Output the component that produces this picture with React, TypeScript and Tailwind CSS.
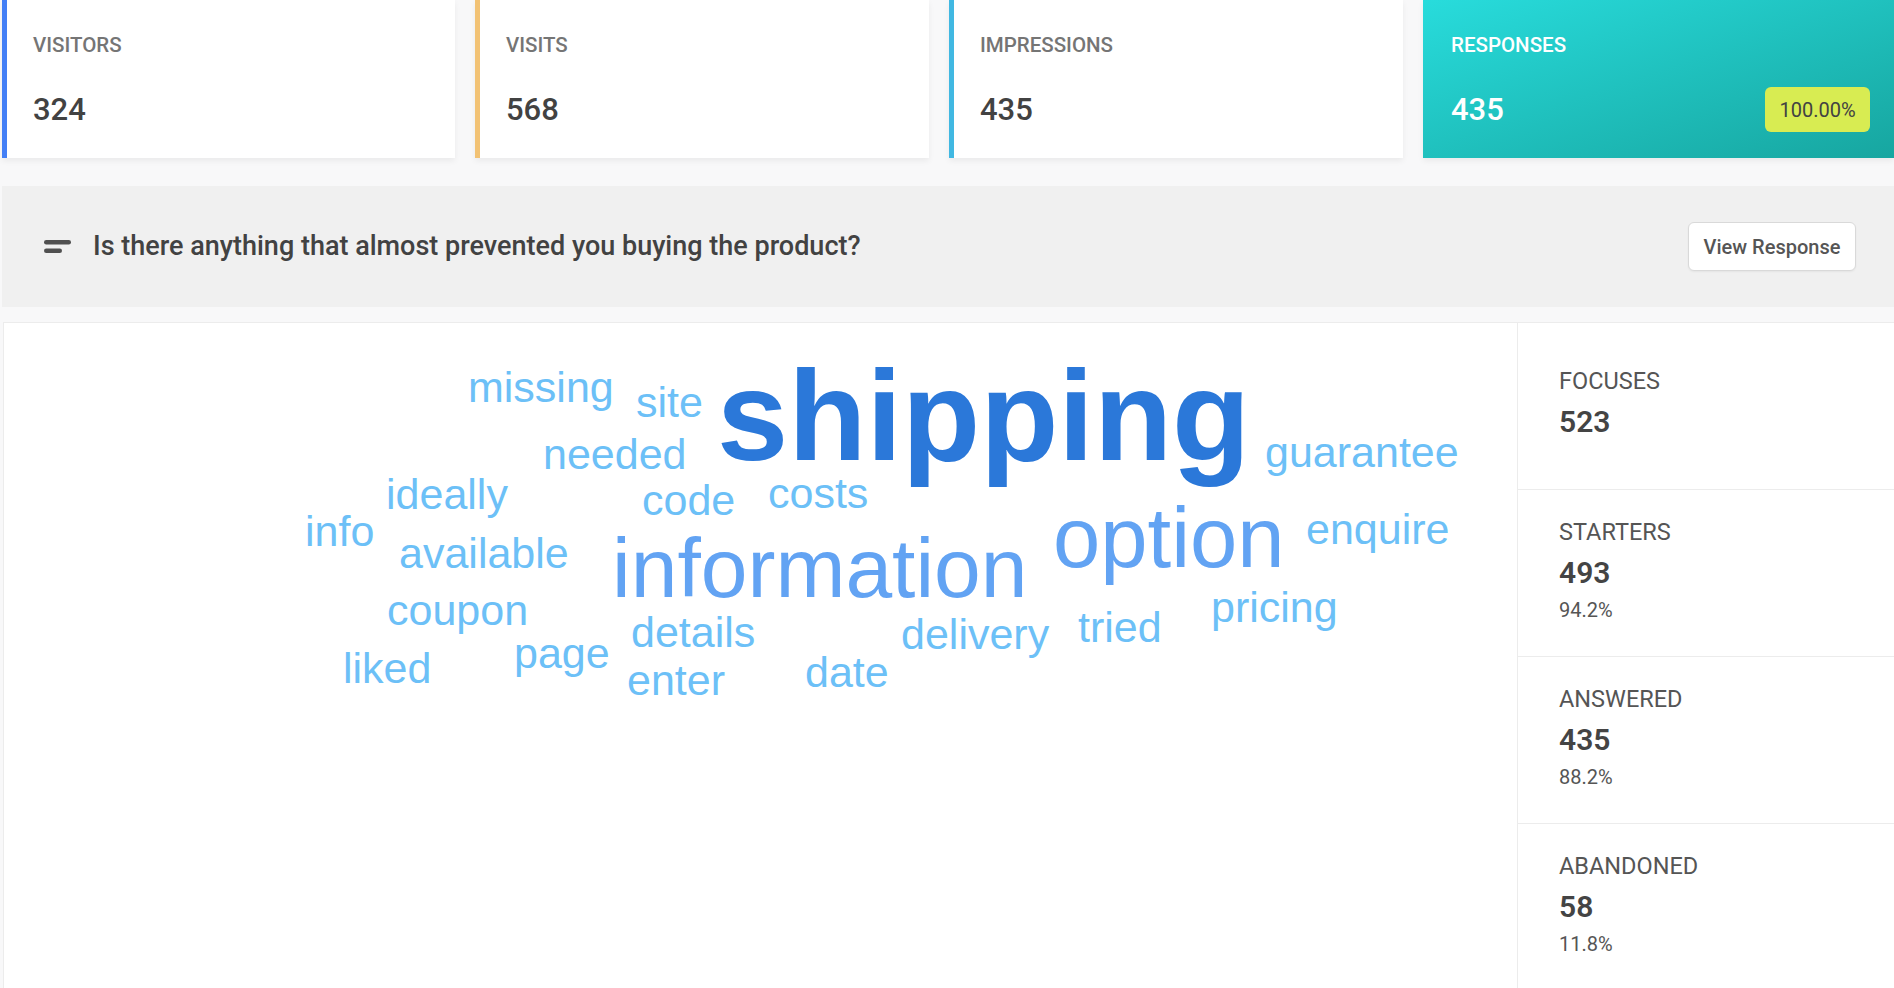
import React from "react";

type Word = { text: string; cls: string };

const words: Word[] = [
  { text: "missing", cls: "left-[464px] top-[43px] text-[43px] text-[#6cc0f7]" },
  { text: "site", cls: "left-[632px] top-[58px] text-[43px] text-[#6cc0f7]" },
  { text: "shipping", cls: "left-[713px] top-[29px] text-[128px] font-bold text-[#2b78d9]" },
  { text: "guarantee", cls: "left-[1261px] top-[108px] text-[43px] text-[#6cc0f7]" },
  { text: "needed", cls: "left-[539px] top-[110px] text-[43px] text-[#6cc0f7]" },
  { text: "ideally", cls: "left-[382px] top-[150px] text-[43px] text-[#6cc0f7]" },
  { text: "code", cls: "left-[638px] top-[156px] text-[43px] text-[#6cc0f7]" },
  { text: "costs", cls: "left-[764px] top-[149px] text-[43px] text-[#6cc0f7]" },
  { text: "info", cls: "left-[301px] top-[187px] text-[43px] text-[#6cc0f7]" },
  { text: "available", cls: "left-[395px] top-[209px] text-[43px] text-[#6cc0f7]" },
  { text: "information", cls: "left-[608px] top-[203px] text-[84px] text-[#62a3f3]" },
  { text: "option", cls: "left-[1049px] top-[172px] text-[85px] text-[#62a3f3]" },
  { text: "enquire", cls: "left-[1302px] top-[185px] text-[43px] text-[#6cc0f7]" },
  { text: "coupon", cls: "left-[383px] top-[266px] text-[43px] text-[#6cc0f7]" },
  { text: "pricing", cls: "left-[1207px] top-[263px] text-[43px] text-[#6cc0f7]" },
  { text: "tried", cls: "left-[1074px] top-[283px] text-[43px] text-[#6cc0f7]" },
  { text: "details", cls: "left-[627px] top-[288px] text-[43px] text-[#6cc0f7]" },
  { text: "delivery", cls: "left-[897px] top-[290px] text-[43px] text-[#6cc0f7]" },
  { text: "liked", cls: "left-[339px] top-[324px] text-[43px] text-[#6cc0f7]" },
  { text: "page", cls: "left-[510px] top-[309px] text-[43px] text-[#6cc0f7]" },
  { text: "enter", cls: "left-[623px] top-[336px] text-[43px] text-[#6cc0f7]" },
  { text: "date", cls: "left-[801px] top-[328px] text-[43px] text-[#6cc0f7]" },
];

function StatCard({ label, value, border }: { label: string; value: string; border: string }) {
  return (
    <div
      className={`h-full flex flex-col bg-white border-l-[5px] ${border} pl-[26px] pt-[33px] shadow-[0_3px_6px_rgba(0,0,0,0.06)]`}
    >
      <div className="text-[20.5px] leading-[25px] font-medium text-[#757575]">{label}</div>
      <div className="mt-[33px] text-[31px] leading-[38px] font-medium text-[#424242]">{value}</div>
    </div>
  );
}

const stats = [
  { label: "FOCUSES", value: "523", pct: "" },
  { label: "STARTERS", value: "493", pct: "94.2%" },
  { label: "ANSWERED", value: "435", pct: "88.2%" },
  { label: "ABANDONED", value: "58", pct: "11.8%" },
];

export default function App() {
  return (
    <div className="w-[1894px] h-[988px] overflow-hidden bg-[#f8f8f9] pl-[2px] font-[Roboto,'Noto_Sans',sans-serif]">
      {/* top cards */}
      <div className="flex gap-[20px] h-[158px]">
        <div className="w-[453px] h-full">
          <StatCard label="VISITORS" value="324" border="border-[#437ff6]" />
        </div>
        <div className="w-[454px] h-full">
          <StatCard label="VISITS" value="568" border="border-[#f2c274]" />
        </div>
        <div className="w-[454px] h-full">
          <StatCard label="IMPRESSIONS" value="435" border="border-[#41b8e2]" />
        </div>
        <div className="flex-1 h-full flex flex-col pl-[28px] pr-[24px] pt-[33px] bg-linear-to-br from-[#28dcdc] to-[#17a6a0] shadow-[0_3px_6px_rgba(0,0,0,0.06)]">
          <div className="text-[20.5px] leading-[25px] font-medium text-white">RESPONSES</div>
          <div className="mt-[29px] flex items-center justify-between">
            <div className="text-[31px] leading-[38px] font-medium text-white">435</div>
            <div className="h-[45px] w-[105px] rounded-[6px] bg-[#d8ec52] flex items-center justify-center text-[20px] text-[#424242]">
              100.00%
            </div>
          </div>
        </div>
      </div>

      {/* question bar */}
      <div className="mt-[28px] h-[121px] bg-[#f0f0f0] flex items-center pl-[41px] pr-[38px]">
        <svg width="29" height="16" viewBox="0 0 29 16" className="shrink-0">
          <rect x="1" y="1" width="27" height="4.5" rx="2.25" fill="#505050" />
          <rect x="1" y="9.5" width="18" height="4.5" rx="2.25" fill="#505050" />
        </svg>
        <div className="ml-[21px] text-[27px] font-medium text-[#424242]">
          Is there anything that almost prevented you buying the product?
        </div>
        <button className="ml-auto h-[49px] w-[168px] rounded-[6px] border border-[#d9d9d9] bg-white text-[20px] font-medium text-[#555555] shadow-[0_1px_2px_rgba(0,0,0,0.05)]">
          View Response
        </button>
      </div>

      {/* main panel */}
      <div className="mt-[15px] ml-[1px] w-[1892px] flex border border-[#ececec] bg-white">
        <div className="relative w-[1513px] h-[700px] font-['Liberation_Sans',Arial,sans-serif]">
          {words.map((w) => (
            <span key={w.text} className={`absolute whitespace-nowrap leading-none ${w.cls}`}>
              {w.text}
            </span>
          ))}
        </div>
        <div className="flex-1 border-l border-[#ececec] flex flex-col">
          {stats.map((s) => (
            <div
              key={s.label}
              className="h-[167px] shrink-0 border-b border-[#ececec] flex flex-col justify-center pl-[41px] pb-[5px]"
            >
              <div className="text-[23.5px] leading-[27px] text-[#555555]">{s.label}</div>
              <div className="mt-[9px] text-[30px] leading-[36px] font-semibold text-[#444444]">{s.value}</div>
              {s.pct && <div className="mt-[7px] text-[20px] leading-[24px] text-[#555555]">{s.pct}</div>}
            </div>
          ))}
        </div>
      </div>
    </div>
  );
}
